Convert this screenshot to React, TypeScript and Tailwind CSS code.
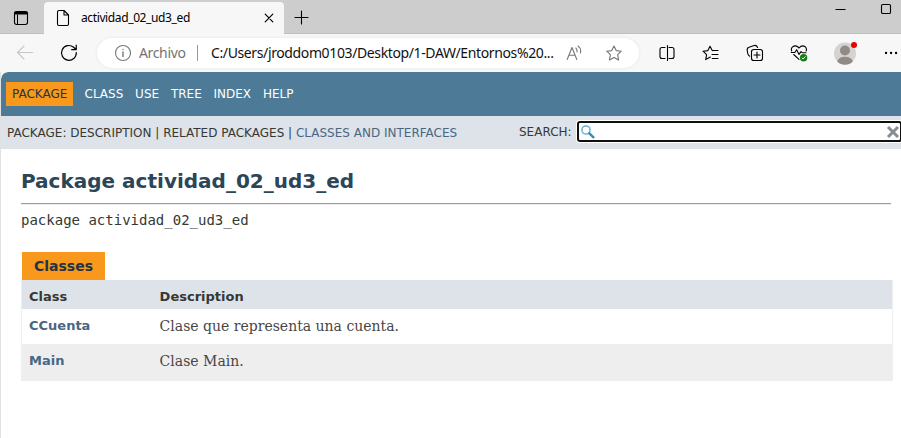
import type { ReactNode } from "react";

const SANS = "font-['DejaVu_Sans',sans-serif]";
const UI = "font-['Noto_Sans',sans-serif]";

function Icon({ w, h, className = "", children }: { w: number; h: number; className?: string; children: ReactNode }) {
  return (
    <svg
      width={w}
      height={h}
      viewBox={`0 0 ${w} ${h}`}
      fill="none"
      stroke="currentColor"
      strokeLinecap="round"
      strokeLinejoin="round"
      className={`block shrink-0 ${className}`}
    >
      {children}
    </svg>
  );
}

const STAR = "M8 1 L10.2 5.6 L15.3 6.2 L11.6 9.7 L12.6 14.9 L8 12.4 L3.4 14.9 L4.4 9.7 L.7 6.2 L5.8 5.6 Z";

function TabStrip() {
  return (
    <div className="flex h-[34px] items-start bg-[#cdcdcd] shadow-[inset_0_-1px_0_#bfbfbf]">
      <Icon w={16} h={16} className="mt-[10px] ml-[13px] text-black">
        <rect x="1.5" y="1.5" width="13" height="13" rx="2.2" strokeWidth="1.1" />
        <path d="M2.5 3H13.5" strokeWidth="3" />
        <path d="M4.5 5V14" strokeWidth="1" />
      </Icon>
      <div className="mt-[2px] ml-[15px] flex h-[32px] w-[240px] items-start rounded-t-[4px] bg-[#f7f7f7]">
        <Icon w={14} h={18} className="mt-[7px] ml-[12px] text-black">
          <path d="M8 1.5H3Q1.5 1.5 1.5 3V15Q1.5 16.5 3 16.5H11Q12.5 16.5 12.5 15V6Z M8 1.5V6H12.5" strokeWidth="1.1" />
        </Icon>
        <span className={`${UI} mt-[7px] ml-[11px] w-[183px] text-[12px] leading-[18px] tracking-[-0.38px] whitespace-nowrap text-black`}>
          actividad_02_ud3_ed
        </span>
        <Icon w={10} h={10} className="mt-[11px] text-black">
          <path d="M1.2 1.2L8.8 8.8M8.8 1.2L1.2 8.8" strokeWidth="1.2" />
        </Icon>
      </div>
      <Icon w={15} h={15} className="mt-[10px] ml-[10px] text-black">
        <path d="M7.5 1V14M1 7.5H14" strokeWidth="1.1" />
      </Icon>
      <Icon w={11} h={3} className="mt-[8px] ml-[526px] text-black">
        <path d="M0.5 1.5H10.5" strokeWidth="1" strokeLinecap="butt" />
      </Icon>
      <Icon w={12} h={12} className="mt-[3px] ml-[34px] text-black">
        <rect x="1.5" y="1.5" width="9" height="9" rx="1.3" strokeWidth="1.1" />
      </Icon>
    </div>
  );
}

function Toolbar() {
  return (
    <div className="flex h-[38px] items-center overflow-hidden bg-[#f7f7f7]">
      <Icon w={18} h={16} className="ml-[16px] text-[#c6c6c6]">
        <path d="M16.5 7.5H1.5M8 1L1.5 7.5L8 14" strokeWidth="1.1" />
      </Icon>
      <Icon w={18} h={18} className="ml-[26px] text-black">
        <path d="M16.3 8.5A7.4 7.4 0 1 1 13.6 3.2L16 5.5M16.2 1.2V5.7H11.7" strokeWidth="1.2" />
      </Icon>
      <div className="ml-[19px] flex h-[30px] w-[542px] items-center rounded-full bg-white shadow-[0_0_3px_#e2e2e2]">
        <Icon w={18} h={18} className="ml-[17px] text-[#767676]">
          <circle cx="9" cy="9" r="7.5" strokeWidth="1.1" />
          <path d="M9 8V12.5M9 5.4V5.6" strokeWidth="1.4" />
        </Icon>
        <span className={`${UI} ml-[7px] w-[58px] text-[14px] leading-[20px] tracking-[-0.35px] whitespace-nowrap text-[#747474]`}>Archivo</span>
        <div className="h-[16px] w-px bg-[#999]" />
        <span className={`${UI} ml-[13px] w-[355px] text-[14px] leading-[20px] tracking-[-0.38px] whitespace-nowrap text-[#111]`}>
          C:/Users/jroddom0103/Desktop/1-DAW/Entornos%20...
        </span>
        <Icon w={16} h={16} className="text-[#767676]">
          <path d="M1.2 14.5L6 2.5L10.8 14.5M3 10.3H9M9.8 3Q11.3 4.2 11 7M12 1Q15.5 3.5 14.4 8" strokeWidth="1.1" />
        </Icon>
        <Icon w={16} h={16} className="ml-[24px] text-[#767676]">
          <path d={STAR} strokeWidth="1.1" />
        </Icon>
      </div>
      <Icon w={16} h={18} className="ml-[20px] text-black">
        <path d="M6 3.5H3Q1 3.5 1 5.5V12.5Q1 14.5 3 14.5H6M10 3.5H13Q15 3.5 15 5.5V12.5Q15 14.5 13 14.5H10M8.5 1.5V16.5" strokeWidth="1.1" />
      </Icon>
      <Icon w={18} h={16} className="ml-[27px] text-black">
        <path d="M10.5 5.6L10.1 5.3L8 1.2L5.9 5.6L1 6.2L4.6 9.6L3.7 14.6L8.3 12.1M11.2 5.5H16M10 9.5H16M10.2 13.5H16" strokeWidth="1.1" />
      </Icon>
      <Icon w={18} h={18} className="ml-[26px] text-black">
        <path d="M3.7 12.2Q2.3 11.6 1.8 9.7L1.2 6.5Q.8 4 3 3.3L8.2 1.5Q10.5 1 11.6 3.4" strokeWidth="1.1" />
        <rect x="5.5" y="5.5" width="11" height="11" rx="2.3" strokeWidth="1.1" />
        <path d="M11 8V14M8 11H14" strokeWidth="1.1" />
      </Icon>
      <Icon w={18} h={18} className="ml-[26px] text-black">
        <path d="M1.7 7Q.7 4.4 2.6 2.9Q5.2.8 8 3Q9 4 9 4Q12.2.5 15.1 2.7Q17.2 4.5 16.1 7M1.2 8.5H4.8L6.7 5.7L9 10.4L11 7.6L12.2 8.7H16M3.7 10.5L9 15.3" strokeWidth="1.1" />
        <circle cx="13.6" cy="13.8" r="3.7" fill="#137e13" stroke="none" />
        <path d="M12 14L13.1 15L15.2 12.7" stroke="#fff" strokeWidth="1" />
      </Icon>
      <Icon w={24} h={24} className="ml-[25px]">
        <circle cx="12" cy="12.5" r="11" fill="#d5d2cf" stroke="none" />
        <circle cx="12" cy="9.5" r="5" fill="#918b86" stroke="none" />
        <path d="M4.2 20.5Q5.5 15.7 12 15.7T19.8 20.5A11 11 0 0 1 4.2 20.5Z" fill="#918b86" stroke="none" />
        <circle cx="21" cy="3.9" r="3" fill="#e60000" stroke="none" />
      </Icon>
      <Icon w={14} h={4} className="ml-[27px] text-black">
        <path d="M2 2H2.1M7 2H7.1M12 2H12.1" strokeWidth="2.3" />
      </Icon>
    </div>
  );
}

function NavBar() {
  return (
    <nav className={`${SANS} flex h-[44px] items-center rounded-tl-[7px] bg-[#4d7a97] pl-[5px] text-[12px] leading-[14px] text-white`}>
      <span className="flex h-[24px] w-[67px] items-center bg-[#f8981d] pl-[6px] text-[#253441]">PACKAGE</span>
      <div className="ml-[11.5px] flex gap-[11.8px]">
        <span>CLASS</span>
        <span>USE</span>
        <span>TREE</span>
        <span>INDEX</span>
        <span>HELP</span>
      </div>
    </nav>
  );
}

function SubNav() {
  return (
    <div className={`${SANS} flex h-[33px] items-center overflow-hidden bg-[#dee3e9] pl-[6px] text-[12px] leading-[14px] whitespace-nowrap text-[#353833]`}>
      <span className="w-[512px] shrink-0">
        PACKAGE: DESCRIPTION | RELATED PACKAGES | <span className="text-[#4a6782]">CLASSES AND INTERFACES</span>
      </span>
      <span className="w-[58px] shrink-0 pb-[2px]">SEARCH:</span>
      <div className="mb-[2px] flex h-[21px] w-[325px] shrink-0 items-center rounded-[3px] border-2 border-[#101010] bg-white pl-px shadow-[0_0_0_1px_#fff]">
        <Icon w={16} h={16}>
          <circle cx="6" cy="6" r="4.1" stroke="#6eaed0" strokeWidth="1.5" />
          <path d="M9.3 9.3L13.5 13.3" stroke="#2d8abd" strokeWidth="2.3" />
        </Icon>
        <Icon w={14} h={14} className="ml-[290px] text-[#888d91]">
          <path d="M2 2L12 12M12 2L2 12" strokeWidth="3" strokeLinecap="butt" />
        </Icon>
      </div>
    </div>
  );
}

const rows = [
  { name: "CCuenta", description: "Clase que representa una cuenta.", style: "h-[35px] bg-white" },
  { name: "Main", description: "Clase Main.", style: "h-[36px] bg-[#eeeeef]" },
];

function PackageSummary() {
  return (
    <main className={`${SANS} pl-[20px] text-[#353833]`}>
      <h1 className="pt-[20px] text-[20px] leading-[24px] font-bold text-[#2c4557]">Package actividad_02_ud3_ed</h1>
      <div className="mt-[10px] h-[2px] w-[870px] border-t border-b border-t-[#9a9a9a] border-b-[#eee]" />
      <div className="mt-[7px] font-['DejaVu_Sans_Mono',monospace] text-[14px] leading-[17px]">package actividad_02_ud3_ed</div>
      <div className="mt-[23px] ml-px flex h-[28px] w-[83px] items-center bg-[#f8981d] pl-[12px] text-[14px] font-bold text-[#253441]">Classes</div>
      <div className="w-[872px] border-x border-b border-[#eee]">
        <div className="flex h-[29px] bg-[#dee3e9] pt-[8px] pl-[7px] text-[13px] leading-[17px] font-bold">
          <span className="w-[130.6px]">Class</span>
          <span>Description</span>
        </div>
        {rows.map((row) => (
          <div key={row.name} className={`flex pt-[8px] pl-[7px] leading-[17px] ${row.style}`}>
            <span className="w-[130.6px] text-[13px] font-bold text-[#4a6782]">{row.name}</span>
            <span className="pt-px font-['DejaVu_Serif',serif] text-[14px] text-[#474747]">{row.description}</span>
          </div>
        ))}
      </div>
    </main>
  );
}

export default function App() {
  return (
    <div className="h-[438px] w-[901px] overflow-hidden bg-[#f7f7f7]">
      <TabStrip />
      <Toolbar />
      <div className="flex h-[366px]">
        <div className="w-px shrink-0 bg-[#e1e1e1]" />
        <div className="h-full w-[900px] overflow-hidden rounded-tl-[7px] bg-white">
          <NavBar />
          <SubNav />
          <PackageSummary />
        </div>
      </div>
    </div>
  );
}
